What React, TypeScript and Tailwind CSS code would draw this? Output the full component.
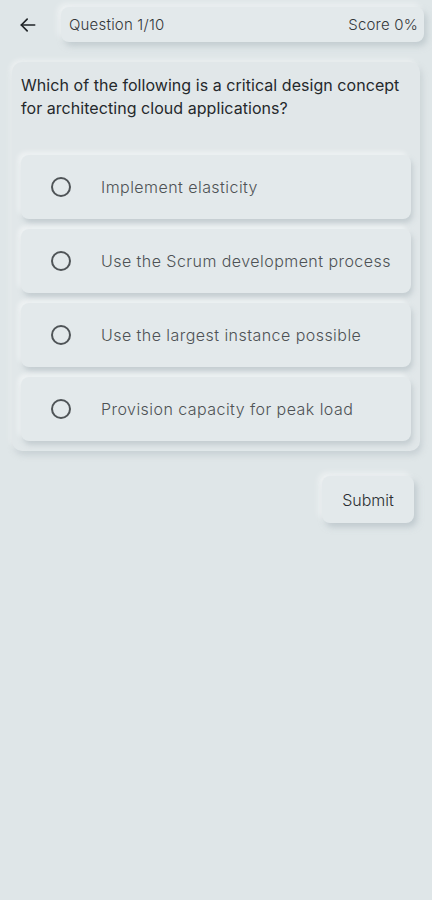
import React, { useState } from 'react';

const options = [
  'Implement elasticity',
  'Use the Scrum development process',
  'Use the largest instance possible',
  'Provision capacity for peak load',
];

const ArrowLeft = () => (
  <svg width="20" height="20" viewBox="0 0 24 24" fill="none" stroke="#1f2326" strokeWidth="2" strokeLinecap="round" strokeLinejoin="round">
    <path d="M20 12H4" />
    <path d="M11 5l-7 7 7 7" />
  </svg>
);

export default function App() {
  const [selected, setSelected] = useState<number | null>(null);

  return (
    <div className="min-h-[900px] w-full bg-[#dfe6e8] font-['Inter','Liberation_Sans',sans-serif] text-[#2a2e31]">
      {/* header */}
      <div className="flex items-center gap-[22px] pl-[17px] pr-[8px] pt-[7px]">
        <button className="flex h-[35px] w-[22px] items-center justify-center">
          <ArrowLeft />
        </button>
        <div className="flex h-[35px] flex-1 items-center justify-between rounded-[8px] bg-[#e3e9eb] pl-[8px] pr-[6px] pt-[2px] text-[15px] font-light tracking-[0.2px] text-[#33373a] shadow-[3px_4px_6px_rgba(170,182,188,0.55),-3px_-3px_6px_rgba(255,255,255,0.55)]">
          <span>Question 1/10</span>
          <span>Score 0%</span>
        </div>
      </div>

      {/* question card */}
      <div className="mx-[12px] mt-[20px] rounded-[10px] bg-[#e1e7e9] px-[9px] pb-[10px] pt-[12px] shadow-[2px_4px_6px_rgba(170,182,188,0.45),-2px_-2px_5px_rgba(255,255,255,0.5)]">
        <p className="pb-[35px] text-[16px] leading-[23px] tracking-[0.05px] text-[#25292c]">
          Which of the following is a critical design concept for architecting cloud applications?
        </p>
        <div className="flex flex-col gap-[10px]">
          {options.map((opt, i) => (
            <button
              key={opt}
              onClick={() => setSelected(i)}
              className="flex h-[64px] items-center rounded-[8px] bg-[#e3e9eb] pl-[30px] text-left shadow-[2px_4px_5px_rgba(170,182,188,0.5),-3px_-3px_5px_rgba(255,255,255,0.5)]"
            >
              <span className="flex h-[20px] w-[20px] items-center justify-center rounded-full border-[2px] border-[#4f5457]">
                {selected === i && <span className="h-[10px] w-[10px] rounded-full bg-[#4f5457]" />}
              </span>
              <span className="ml-[30px] text-[16px] font-light tracking-[0.45px] text-[#4e5255]">{opt}</span>
            </button>
          ))}
        </div>
      </div>

      {/* submit */}
      <div className="flex justify-end pr-[18px] pt-[25px]">
        <button className="h-[47px] w-[92px] rounded-[8px] bg-[#e3e9eb] text-[16px] font-light text-[#2a2e31] shadow-[3px_4px_6px_rgba(170,182,188,0.6),-3px_-3px_6px_rgba(255,255,255,0.55)]">
          Submit
        </button>
      </div>
    </div>
  );
}
